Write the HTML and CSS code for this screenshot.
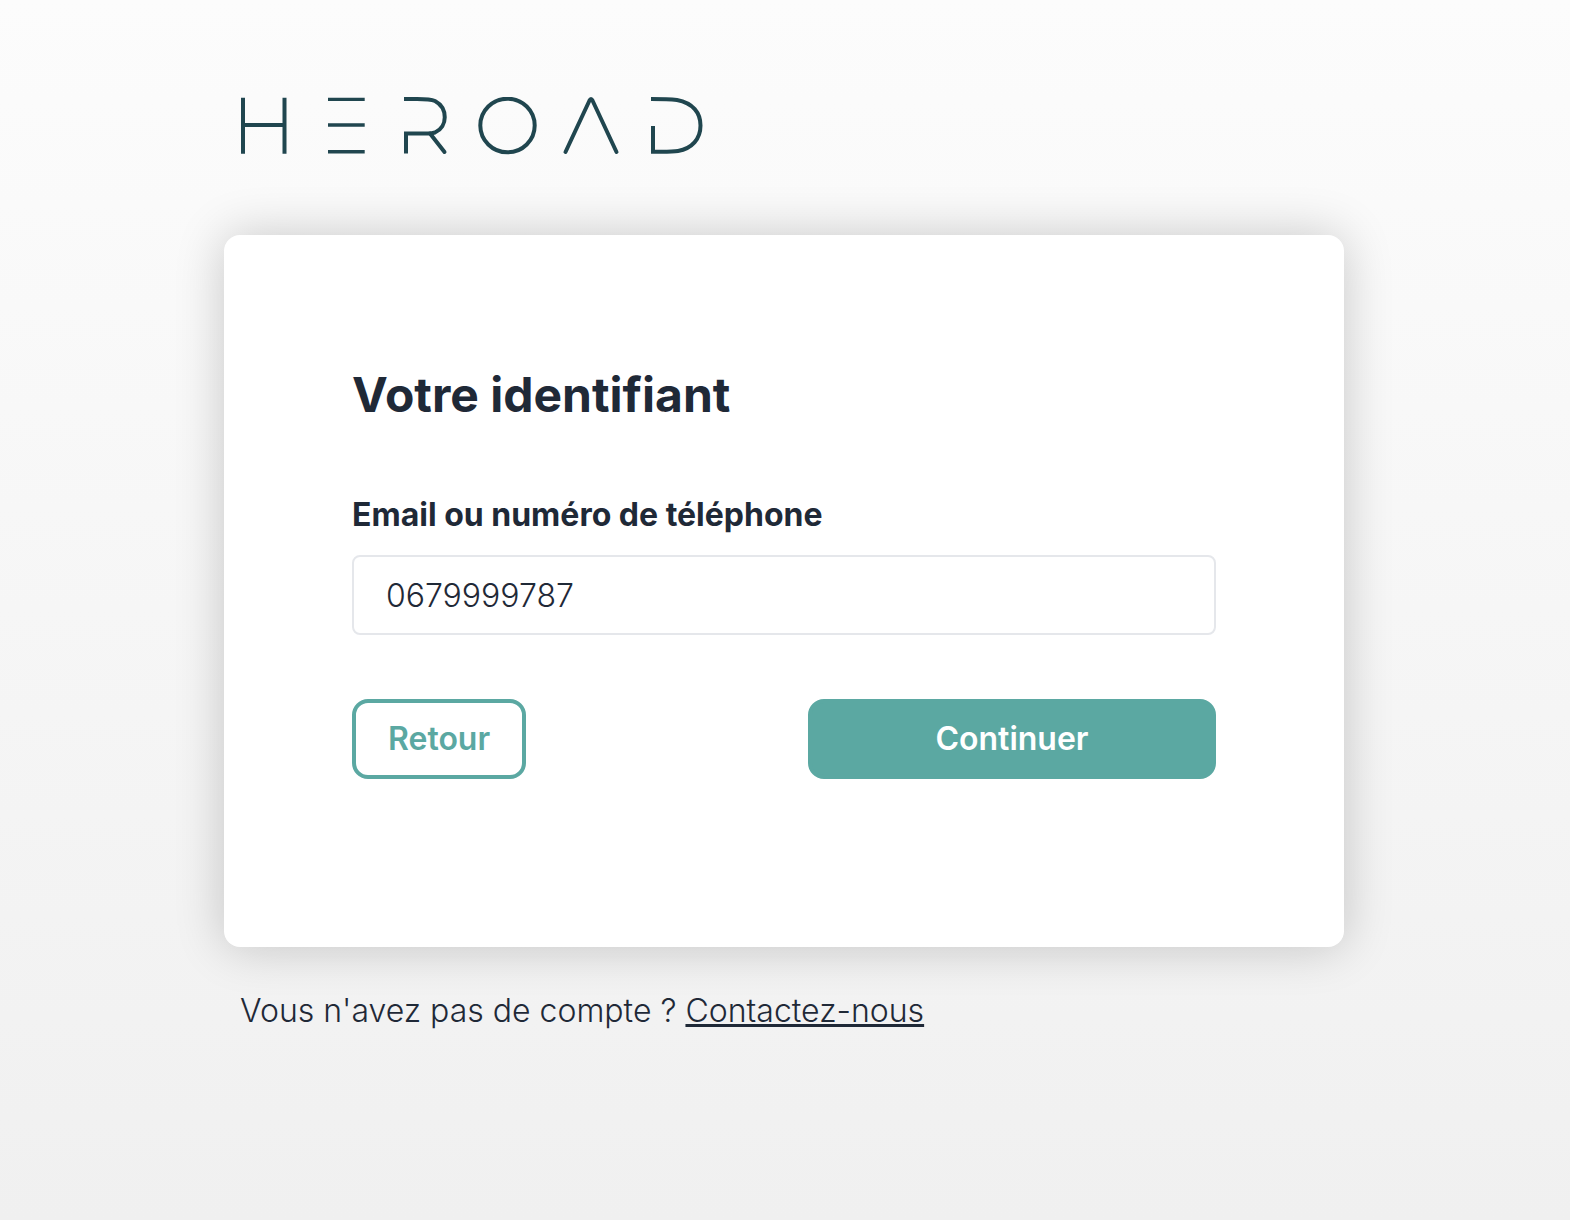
FILE: index.html
```html
<!DOCTYPE html>
<html lang="fr">

<head>
    <meta charset="UTF-8">
    <meta name="viewport" content="width=device-width, initial-scale=1">
    <title>Heroad - Connexion</title>
    <link rel="stylesheet" href="styles.css">
</head>

<body>
    <div class="container">
        <header class="header">
            <svg class="logo" viewBox="-1 0 464 58" role="img" aria-label="Heroad">
                <path d="M2 0.700V56.700M43.500 0.700V56.700M2 28H43.500" />
                <path d="M87 2.400H123.700M87 28H123.700M87 54.700H123.700" stroke-width="3.400" />
                <path d="M163 2H176C184 2 190 2.200 194 4C207 11 207 30 194 35.500Q191 36.500 187 36.500H165V56.500" />
                <path d="M189 36.500L203.500 55" stroke-linecap="round" />
                <ellipse cx="266.500" cy="28.500" rx="27.200" ry="26.800" />
                <path d="M324.500 55L348.500 3.500Q350 0.500 351.500 3.500L375.500 55" stroke-linecap="round" />
                <path d="M410 2C420 2 430 2.300 436 3C452 6 459.500 16 459.500 28.500C459.500 42 451 51.500 437 54C431 55 422 54.700 412 54.700V29" />
            </svg>
        </header>

        <main class="card">
            <h1>Votre identifiant</h1>
            <form method="POST">
                <div class="form-group">
                    <label for="identifier">Email ou numéro de téléphone</label>
                    <input type="text" id="identifier" name="identifier" value="0679999787">
                </div>
                <div class="form-actions">
                    <button type="button" class="btn btn-outline">Retour</button>
                    <button type="submit" class="btn btn-primary">Continuer</button>
                </div>
            </form>
        </main>

        <p class="footer">Vous n'avez pas de compte ? <a href="#">Contactez-nous</a></p>
    </div>
</body>

</html>
```

FILE: styles.css
```css
* {
    box-sizing: border-box;
}

body {
    margin: 0;
    padding-right: 2px;
    min-height: 100vh;
    font-family: Inter, sans-serif;
    font-size: 32px;
    font-weight: 300;
    line-height: 48px;
    color: #1f2937;
    background: linear-gradient(#fcfcfc, #f0f0f0);
}

.container {
    width: 100%;
    max-width: 1120px;
    margin: 0 auto;
    padding-top: 97px;
}

.header {
    padding: 0 16px;
    margin-bottom: 80px;
}

.logo {
    display: block;
    width: 464px;
    max-width: 100%;
    fill: none;
    stroke: #20464f;
    stroke-width: 4;
}

.card {
    padding: 128px;
    padding-bottom: 168px;
    background: white;
    border-radius: 16px;
    box-shadow: 0 0 50px rgba(0, 0, 0, 0.2);
}

h1 {
    margin: 0 0 64px;
    font-size: 48px;
    font-weight: 700;
    line-height: 64px;
}

.form-group {
    margin-bottom: 64px;
}

.form-group label {
    display: block;
    margin-bottom: 16px;
    font-weight: 700;
}

.form-group input {
    display: block;
    width: 100%;
    height: 80px;
    padding: 0 32px;
    border: 2px solid #e5e7eb;
    border-radius: 8px;
    font: inherit;
    color: inherit;
}

.form-actions {
    display: flex;
    justify-content: space-between;
}

.btn {
    height: 80px;
    padding: 0 32px;
    border: 4px solid #5ba8a2;
    border-radius: 16px;
    font: inherit;
    font-weight: 600;
    cursor: pointer;
}

.btn-outline {
    color: #5ba8a2;
    background: white;
}

.btn-primary {
    width: 408px;
    color: white;
    background: #5ba8a2;
}

.footer {
    margin: 40px 0 0;
    padding: 0 16px;
}

.footer a {
    color: inherit;
    text-decoration-thickness: 3px;
}
```
